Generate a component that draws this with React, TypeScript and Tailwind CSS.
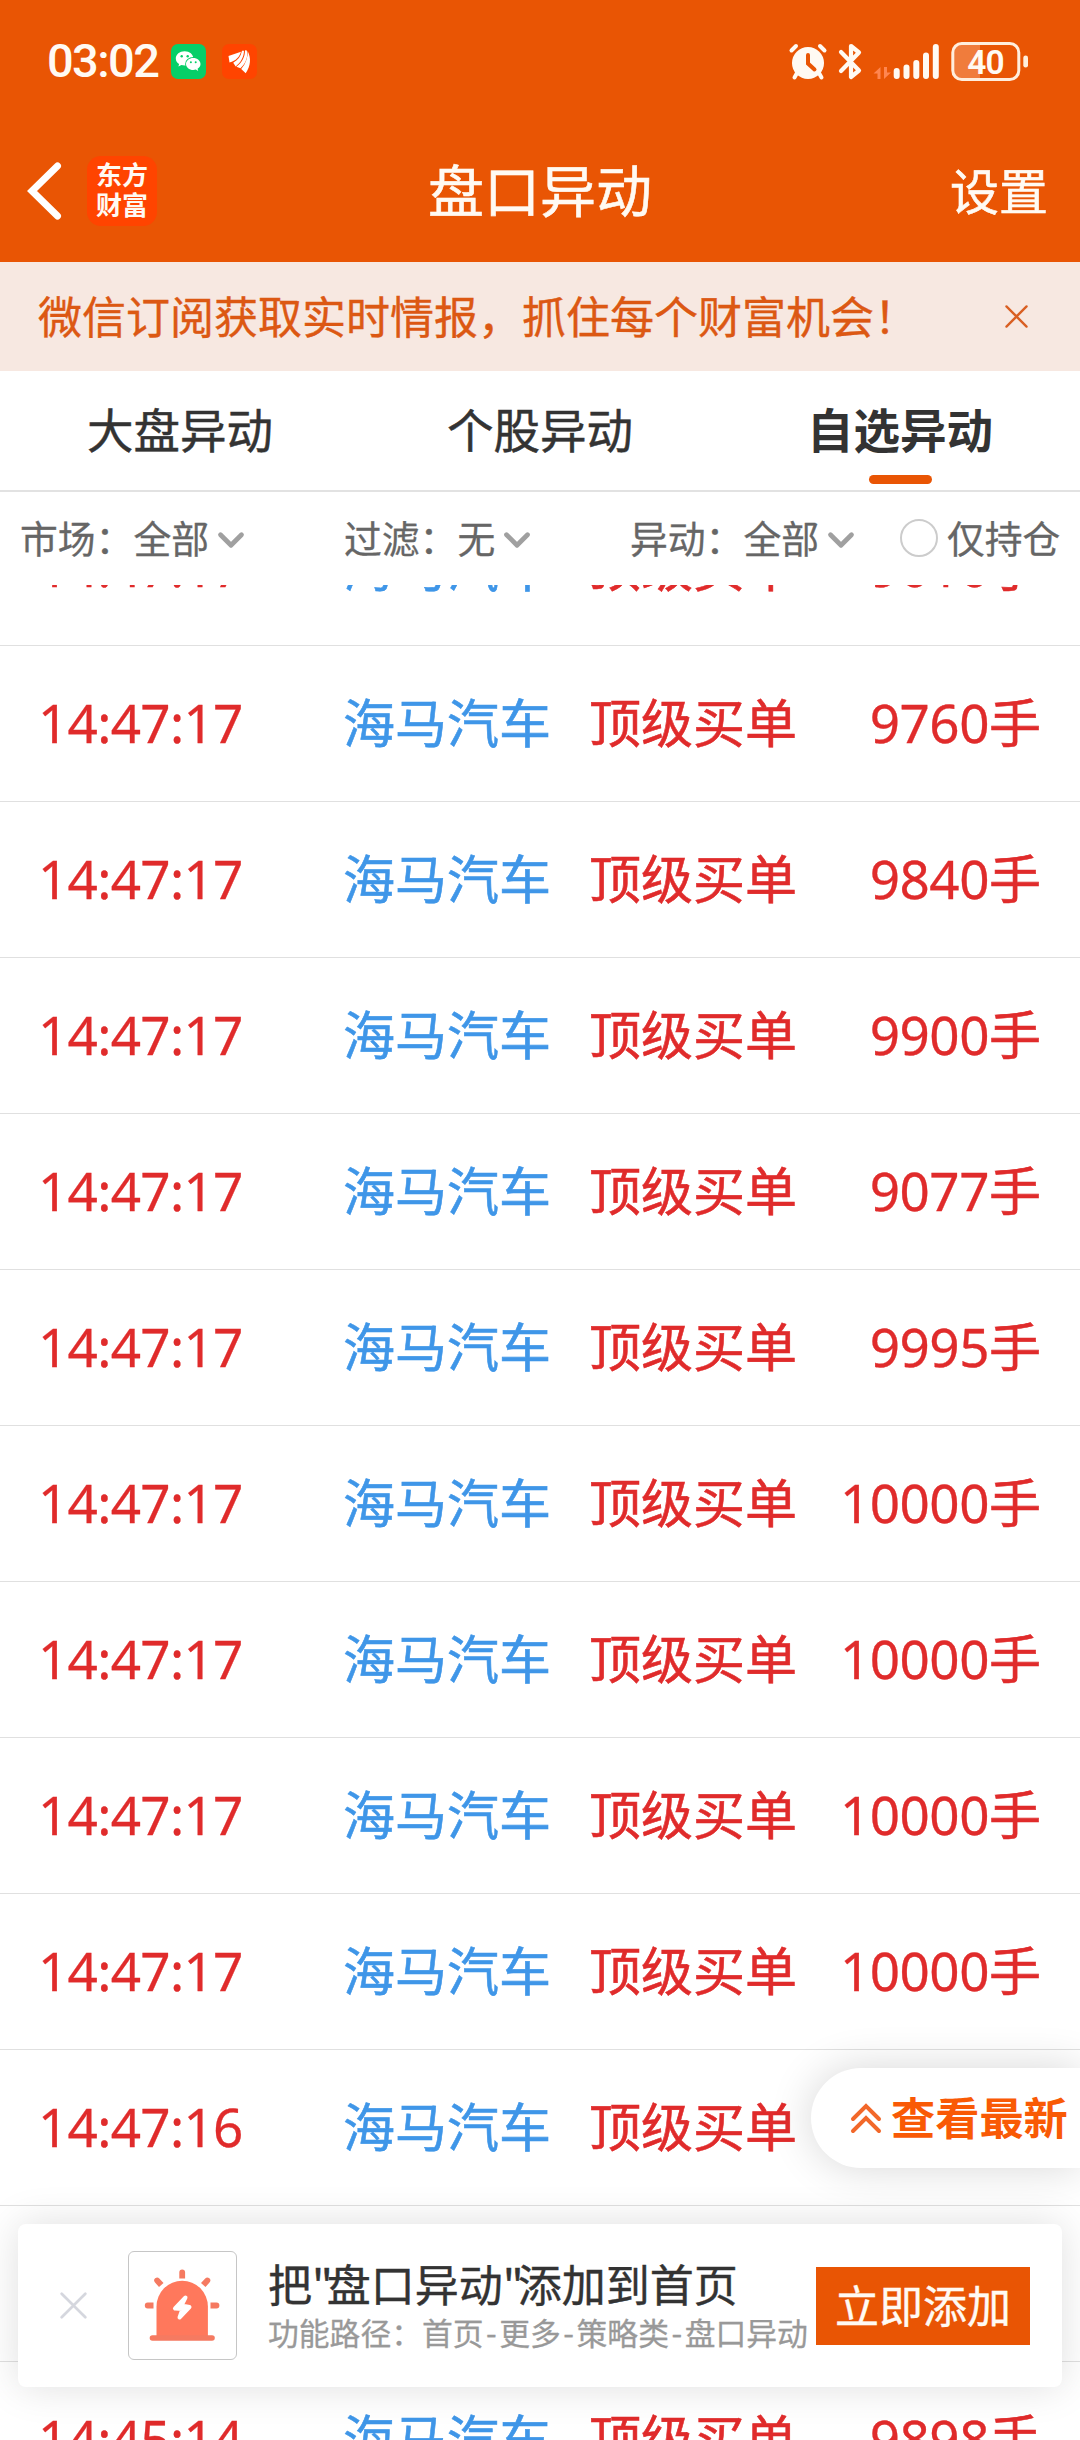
import { Fragment } from "react";
import { ChevronDown } from "lucide-react";

interface Trade {
  time: string;
  volume: string;
}

const STOCK_NAME = "海马汽车";
const TRADE_TYPE = "顶级买单";

// null keeps the slot of a row that sits behind the bottom card
const trades: Array<Trade | null> = [
  { time: "14:47:17", volume: "9010" },
  { time: "14:47:17", volume: "9760" },
  { time: "14:47:17", volume: "9840" },
  { time: "14:47:17", volume: "9900" },
  { time: "14:47:17", volume: "9077" },
  { time: "14:47:17", volume: "9995" },
  { time: "14:47:17", volume: "10000" },
  { time: "14:47:17", volume: "10000" },
  { time: "14:47:17", volume: "10000" },
  { time: "14:47:17", volume: "10000" },
  { time: "14:47:16", volume: "" },
  null,
  { time: "14:45:14", volume: "9898" },
];

const tabs = ["大盘异动", "个股异动", "自选异动"];
const ACTIVE_TAB = "自选异动";

const featurePath = ["首页", "更多", "策略类", "盘口异动"];

function WeChatIcon() {
  return (
    <svg width="35" height="35" viewBox="0 0 35 35">
      <rect width="35" height="35" rx="7" fill="#06cf68" />
      <path
        d="M13.6 7.2c-4.9 0-8.8 3.2-8.8 7.2 0 2.3 1.3 4.3 3.3 5.6l-.7 2.6 3-1.5c1 .3 2.1.5 3.2.5 4.9 0 8.8-3.2 8.8-7.2s-3.9-7.2-8.8-7.2z"
        fill="white"
      />
      <ellipse cx="22.3" cy="19.9" rx="8.2" ry="6.8" fill="#06cf68" />
      <path
        d="M22.3 14c-4.1 0-7.3 2.7-7.3 6s3.2 6 7.3 6c.9 0 1.7-.1 2.500-.4l2.4 1.3-.6-2.2c1.800-1.1 2.9-2.8 2.900-4.7 0-3.300-3.200-6-7.300-6z"
        fill="white"
      />
      <g fill="#06cf68">
        <circle cx="10.7" cy="12.2" r="1.2" />
        <circle cx="16.7" cy="12.2" r="1.2" />
        <circle cx="19.9" cy="18.3" r="1" />
        <circle cx="24.7" cy="18.3" r="1" />
      </g>
    </svg>
  );
}

function EastMoneyIcon() {
  return (
    <svg width="35" height="35" viewBox="0 0 35 35">
      <rect width="35" height="35" rx="7" fill="#ff4400" />
      <g fill="white">
        <path d="M6.500 12 19 7.700c-1.500 5-5 9-11.500 10.800z" />
        <path d="M20 6.800h2c-.2 6.500-3.200 11.700-8.300 15.600l-2.500-3.700c4.700-2.400 7.600-6.300 8.800-11.900z" />
        <path d="M23 6.200l1.800.3c1.300 6.600-.7 12.400-6.400 17.700l-4-1.500c6-4.500 8.600-10.100 8.600-16.500z" />
        <path d="M25.600 7c3.800 7.300 3.100 14.800-1.900 22.200l-4.500-4.100c4.800-5.900 6.900-12 6.400-18.100z" />
      </g>
    </svg>
  );
}

function StatusIcons() {
  return (
    <svg width="242" height="40" viewBox="788 40 242 40" fill="none">
      {/* alarm clock */}
      <g stroke="#fffaf3" strokeLinecap="round">
        <circle cx="808" cy="62" r="16" fill="#fffaf3" stroke="none" />
        <path d="M791.5 49.5 796 45M820 45l4.5 4.5" strokeWidth="4" />
        <path d="m797 72-2.5 4.5M819 72l2.5 4.5" strokeWidth="4" />
        <path d="M808 54v8.5l6.5 6" stroke="#e95504" strokeWidth="4" />
      </g>
      {/* bluetooth */}
      <path
        d="m841 51 18 18.5-8 6.5V45l8 6.5-18 18.5"
        stroke="#fffaf3"
        strokeWidth="4.2"
        strokeLinecap="round"
        strokeLinejoin="round"
      />
      {/* data arrows */}
      <path d="M880.5 78V66l-7 6.500h4V78zM884 66v12l7-6.500h-4V66z" fill="#ff8650" />
      {/* signal bars */}
      <g fill="#fffaf3">
        <rect x="893.7" y="67" width="6" height="11" rx="3" />
        <rect x="903.5" y="63.5" width="6" height="14.5" rx="3" />
        <rect x="913.3" y="59" width="6" height="19" rx="3" />
        <rect x="923" y="51.5" width="6" height="26.5" rx="3" />
        <rect x="932.8" y="43" width="6" height="35" rx="3" />
      </g>
      {/* battery */}
      <path d="M962 44h18v33h-18q-8 0-8-8V52q0-8 8-8z" fill="#f07c3c" />
      <rect x="952.8" y="42.5" width="66" height="36" rx="9" stroke="#ffeedd" strokeWidth="3" />
      <rect x="1023.3" y="54.5" width="4.7" height="12" rx="2.3" fill="#ffeedd" />
      <text
        x="985.5"
        y="72.5"
        textAnchor="middle"
        fontFamily="Roboto, sans-serif"
        fontSize="33.5"
        fontWeight="600"
        letterSpacing="-1"
        fill="#fffaf3"
      >
        40
      </text>
    </svg>
  );
}

function SirenIcon() {
  return (
    <svg width="107" height="107" viewBox="1 1 107 107" fill="none">
      <path d="M28.5 86V55.5a25.700 25.700 0 0 1 51.400 0V86z" fill="#ff785c" />
      <path d="M24.5 87h59.500" stroke="#f57a61" strokeWidth="5.6" strokeLinecap="round" />
      <g fill="#f57a61">
        <path d="M51.3 27.5v-6.200a2.900 2.900 0 0 1 5.800 0v6.200z" />
        <path d="M25.5 51.6h-5.800a2.900 2.900 0 0 0 0 5.800h5.800zM82.5 51.6h6a2.900 2.900 0 0 1 0 5.800h-6z" />
        <path d="m31 36-4-4.500a2.900 2.900 0 0 1 4.300-4l4.200 4.500zM77.500 36l4-4.500a2.900 2.900 0 0 0-4.300-4l-4.200 4.500z" />
      </g>
      <path
        d="M57.5 46.5 47 57.5l7.500.5-3 8.500L61.500 56l-8-1.500z"
        fill="white"
        stroke="white"
        strokeWidth="4"
        strokeLinecap="round"
        strokeLinejoin="round"
      />
    </svg>
  );
}

function CloseIcon({ size, color, weight }: { size: number; color: string; weight: number }) {
  return (
    <svg width={size} height={size} viewBox="0 0 24 24" fill="none">
      <path
        d="M1.5 1.5l21 21M22.5 1.5l-21 21"
        stroke={color}
        strokeWidth={weight}
        strokeLinecap="round"
      />
    </svg>
  );
}

function Filter({ label, value }: { label: string; value: string }) {
  return (
    <div className="flex items-center">
      <span className="pb-[4px]">{label}：{value}</span>
      <ChevronDown className="mt-[2px] ml-[1px] h-[42px] w-[42px] text-[#a0a0a0]" strokeWidth={2.7} />
    </div>
  );
}

function Header() {
  return (
    <header className="h-[262px] shrink-0 bg-[#e95504] text-[#fffaf3]">
      <div className="flex h-[122px] items-center pr-[50px] pl-[47px]">
        <span className="w-[124px] pt-[1px] font-['Roboto'] text-[47px] font-medium tracking-[-1.6px]">03:02</span>
        <WeChatIcon />
        <div className="ml-4 flex-1">
          <EastMoneyIcon />
        </div>
        <StatusIcons />
      </div>
      <div className="grid h-[140px] grid-cols-3 items-center pb-[4px]">
        <div className="flex items-center pt-[2px] pl-[27px]">
          <svg width="35" height="58" viewBox="0 0 35 58" fill="none">
            <path d="M30.5 4 5 29l25.5 25" stroke="white" strokeWidth="7" strokeLinecap="round" strokeLinejoin="miter" />
          </svg>
          <div className="ml-[25px] flex h-[70px] w-[70px] flex-col items-center justify-center rounded-[14px] bg-[#ff4400] pb-[4px] text-[26px] leading-[30px] font-bold">
            <span>东方</span>
            <span>财富</span>
          </div>
        </div>
        <h1 className="pb-[4px] text-center text-[56px] leading-none [-webkit-text-stroke:0.6px]">盘口异动</h1>
        <span className="pr-[32px] pb-[4px] text-right text-[49px] leading-none [-webkit-text-stroke:0.6px]">设置</span>
      </div>
    </header>
  );
}

function TradeRow({ trade }: { trade: Trade }) {
  return (
    <div className="grid h-[156px] shrink-0 grid-cols-[305px_246px_210px_1fr] items-center border-b border-[#e0e0e0] pr-[39px] pb-[6px] pl-[38px] text-[52px] leading-none text-[#e02b2b] [-webkit-text-stroke:0.6px]">
      <span className="pt-[3px] font-['Noto_Sans'] text-[53px] tracking-[-0.7px] [-webkit-text-stroke:0.3px]">{trade.time}</span>
      <span className="text-[#3f96e8]">{STOCK_NAME}</span>
      <span>{TRADE_TYPE}</span>
      {trade.volume && (
        <span className="flex items-center justify-end">
          <span className="pt-[3px] font-['Noto_Sans'] text-[53px] tracking-[-0.5px] [-webkit-text-stroke:0.3px]">
            {trade.volume}
          </span>
          手
        </span>
      )}
    </div>
  );
}

function LatestButton() {
  return (
    <button className="absolute top-[2068px] right-0 flex h-[100px] w-[269px] items-center rounded-l-full bg-white pl-[39px] text-[44.2px] leading-none font-bold text-[#f95a05] shadow-[0_0_44px_rgba(0,0,0,0.16)]">
      <svg className="mr-[9px]" width="32" height="32" viewBox="0 0 32 32" fill="none">
        <path
          d="M3 17 16 4l13 13M3 29l13-13 13 13"
          stroke="#f2682a"
          strokeWidth="4"
          strokeLinecap="round"
        />
      </svg>
      <span className="pb-[3px]">查看最新</span>
    </button>
  );
}

function AddToHomeCard() {
  return (
    <div className="absolute top-[2224px] left-[18px] flex h-[163px] w-[1044px] items-center rounded-lg bg-white pr-[32px] pl-[42px] shadow-[0_0_40px_rgba(0,0,0,0.13)]">
      <CloseIcon size={27} color="#d5d7de" weight={2.4} />
      <div className="ml-[41px] flex h-[109px] w-[109px] items-center justify-center rounded-md border border-[#c6c6c6]">
        <SirenIcon />
      </div>
      <div className="ml-[31px] flex-1 whitespace-nowrap">
        <p className="text-[44px] leading-[52px] text-[#333] [-webkit-text-stroke:0.4px]">
          把<span className="tracking-[-6px]">"</span>盘口异动<span className="tracking-[-6px]">"</span>添加到首页
        </p>
        <p className="text-[30.8px] leading-[46px] text-[#999] [-webkit-text-stroke:0.3px]">
          功能路径：
          {featurePath.map((step, i) => (
            <Fragment key={step}>
              {i > 0 && <span className="px-[2.5px]">-</span>}
              {step}
            </Fragment>
          ))}
        </p>
      </div>
      <button className="flex h-[78px] w-[214px] items-center justify-center bg-[#e95504] pb-[4px] text-[44px] leading-none text-[#fffaf3] [-webkit-text-stroke:0.4px]">
        立即添加
      </button>
    </div>
  );
}

export default function App() {
  return (
    <div className="relative flex h-[2440px] w-[1080px] flex-col overflow-hidden bg-white font-['Noto_Sans_CJK_SC',sans-serif]">
      <Header />

      <div className="flex h-[109px] shrink-0 items-center justify-between bg-[#f7e8e1] pr-[52px] pl-[38px] text-[44px] leading-none text-[#dc5813]">
        <span className="pb-[3px] [-webkit-text-stroke:0.4px]">微信订阅获取实时情报，抓住每个财富机会！</span>
        <CloseIcon size={23} color="#d95f22" weight={2.4} />
      </div>

      <nav className="grid h-[121px] shrink-0 grid-cols-3 border-b-2 border-[#e2e2e2] text-[46.5px] leading-none text-[#333]">
        {tabs.map((tab) => (
          <div key={tab} className="relative flex items-center justify-center pb-[4px]">
            <span className={tab === ACTIVE_TAB ? "font-bold" : "[-webkit-text-stroke:0.5px]"}>{tab}</span>
            {tab === ACTIVE_TAB && (
              <div className="absolute bottom-[6px] h-[9px] w-[63px] rounded-full bg-[#e95504]" />
            )}
          </div>
        ))}
      </nav>

      <div className="grid h-[93px] shrink-0 grid-cols-[324px_286px_270px_1fr] items-center pl-[20px] text-[37.8px] leading-none text-[#666] [-webkit-text-stroke:0.3px]">
        <Filter label="市场" value="全部" />
        <Filter label="过滤" value="无" />
        <Filter label="异动" value="全部" />
        <label className="flex items-center gap-[9px] whitespace-nowrap">
          <span className="h-[38px] w-[38px] rounded-full border-2 border-[#ccc]" />
          <span className="pb-[4px]">仅持仓</span>
        </label>
      </div>

      {/* Scrolled list, first row is partly hidden under the filters */}
      <div className="flex-1 overflow-hidden">
        <div className="-mt-[95px] flex flex-col">
          {trades.map((trade, i) =>
            trade ? (
              <TradeRow key={i} trade={trade} />
            ) : (
              <div key={i} className="h-[156px] shrink-0 border-b border-[#e0e0e0]" />
            ),
          )}
        </div>
      </div>

      <LatestButton />
      <AddToHomeCard />
    </div>
  );
}
